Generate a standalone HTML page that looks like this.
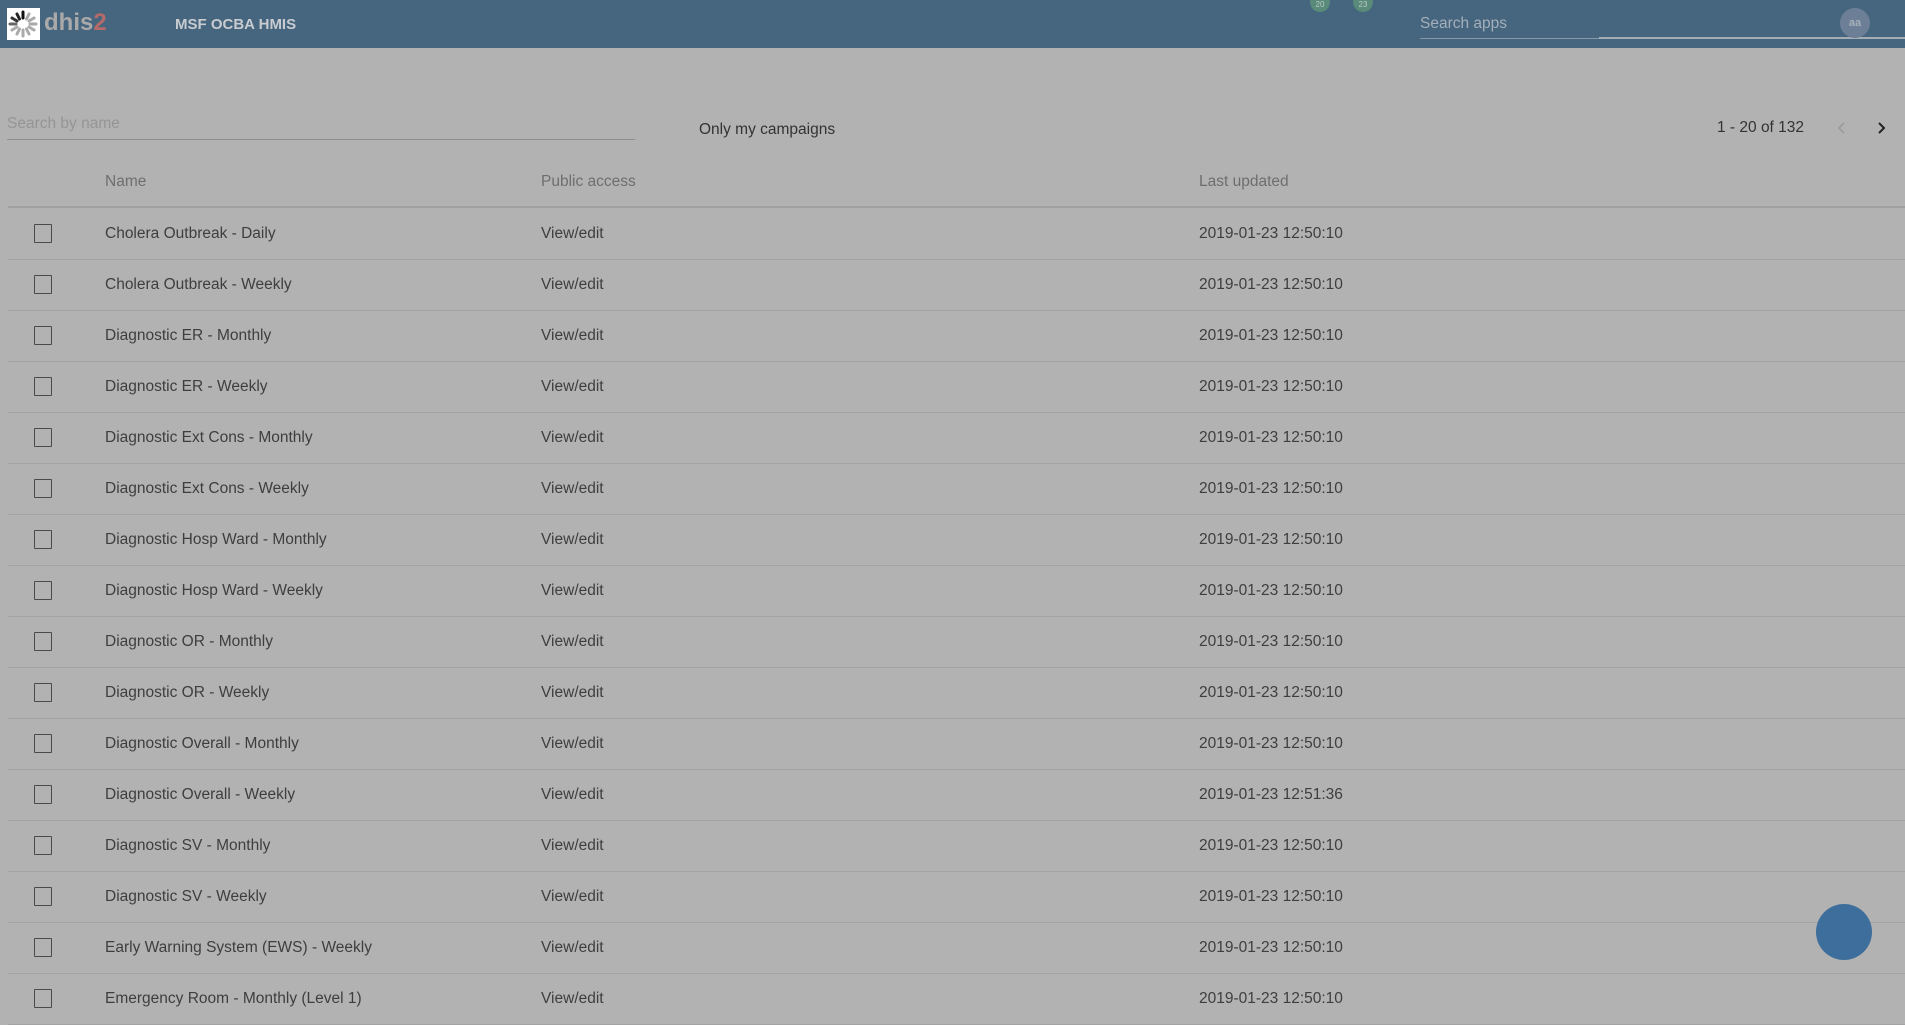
<!DOCTYPE html>
<html><head><meta charset="utf-8"><style>
body{margin:0;width:1905px;height:1008px;overflow:hidden;background:#b2b2b2;font-family:"Liberation Sans",sans-serif;position:relative}
.a{position:absolute;white-space:nowrap}
.hdr{position:absolute;left:0;top:0;width:1905px;height:48px;background:#46657e}
.row{position:absolute;left:8px;width:1897px;height:51px;border-bottom:1px solid #a3a3a3}
.cb{position:absolute;left:26px;top:16px;width:16px;height:17px;border:1.5px solid #4a4a4a;border-radius:1px}
.t{position:absolute;top:17px;font-size:15.5px;color:#3e3e3e}
</style></head><body>
<div class="hdr"></div>
<div class="a" style="left:7px;top:8px;width:33px;height:32px;background:#fff"></div>
<svg class="a" style="left:7px;top:8px" width="33" height="32" viewBox="0 0 33 32">
<g stroke-width="3" stroke-linecap="round">
<line x1="16" y1="4" x2="16" y2="10" stroke="#111"/>
<line x1="10" y1="6" x2="12.5" y2="11" stroke="#222"/>
<line x1="5" y1="10" x2="10" y2="13" stroke="#333"/>
<line x1="3" y1="16" x2="9" y2="16" stroke="#666"/>
<line x1="5" y1="22" x2="10" y2="19" stroke="#aaa"/>
<line x1="10" y1="26" x2="12.5" y2="21" stroke="#aaa"/>
<line x1="16" y1="28" x2="16" y2="22" stroke="#aaa"/>
<line x1="22" y1="26" x2="19.5" y2="21" stroke="#aaa"/>
<line x1="27" y1="22" x2="22" y2="19" stroke="#aaa"/>
<line x1="29" y1="16" x2="23" y2="16" stroke="#aaa"/>
<line x1="27" y1="10" x2="22" y2="13" stroke="#aaa"/>
<line x1="22" y1="6" x2="19.5" y2="11" stroke="#aaa"/>
</g></svg>
<div class="a" style="left:44px;top:9px;font-size:24px;font-weight:bold;color:#a9a9a9">dhis<span style="color:#b56a6a">2</span></div>
<div class="a" style="left:175px;top:16px;font-size:15px;font-weight:bold;color:#c8ccd0">MSF OCBA HMIS</div>
<div class="a" style="left:1310px;top:-8px;width:20px;height:20px;border-radius:50%;background:#5a8a79;color:#b8ccc4;font-size:8px;text-align:center;line-height:26px">20</div>
<div class="a" style="left:1353px;top:-8px;width:20px;height:20px;border-radius:50%;background:#5a8a79;color:#b8ccc4;font-size:8px;text-align:center;line-height:26px">23</div>
<div class="a" style="left:1420px;top:15px;font-size:15.5px;color:#a3afba">Search apps</div>
<div class="a" style="left:1420px;top:38px;width:180px;height:1px;background:#8799a8"></div>
<div class="a" style="left:1599px;top:37px;width:306px;height:2px;background:#a6aeb5"></div>
<div class="a" style="left:1840px;top:8px;width:30px;height:30px;border-radius:50%;background:#6c7f96;color:#a7b1bc;font-size:11px;font-weight:bold;text-align:center;line-height:30px">aa</div>

<div class="a" style="left:7px;top:115px;font-size:15.5px;color:#959595">Search by name</div>
<div class="a" style="left:7px;top:139px;width:628px;height:1px;background:#8f8f8f"></div>
<div class="a" style="left:699px;top:121px;font-size:15.5px;color:#333">Only my campaigns</div>
<div class="a" style="left:1717px;top:119px;font-size:15.5px;color:#333">1 - 20 of 132</div>
<svg class="a" style="left:1836px;top:121px" width="12" height="14"><path d="M8 2L3 7L8 12" fill="none" stroke="#999" stroke-width="1.5"/></svg>
<svg class="a" style="left:1875px;top:121px" width="12" height="14"><path d="M4 2L9 7L4 12" fill="none" stroke="#222" stroke-width="2"/></svg>

<div class="a" style="left:105px;top:173px;font-size:15.5px;color:#6e6e6e">Name</div>
<div class="a" style="left:541px;top:173px;font-size:15.5px;color:#6e6e6e">Public access</div>
<div class="a" style="left:1199px;top:173px;font-size:15.5px;color:#6e6e6e">Last updated</div>
<div class="a" style="left:8px;top:206px;width:1897px;height:2px;background:#a0a0a0"></div>

<div class="row" style="top:208px"><div class="cb"></div><div class="t" style="left:97px">Cholera Outbreak - Daily</div><div class="t" style="left:533px">View/edit</div><div class="t" style="left:1191px">2019-01-23 12:50:10</div></div>
<div class="row" style="top:259px"><div class="cb"></div><div class="t" style="left:97px">Cholera Outbreak - Weekly</div><div class="t" style="left:533px">View/edit</div><div class="t" style="left:1191px">2019-01-23 12:50:10</div></div>
<div class="row" style="top:310px"><div class="cb"></div><div class="t" style="left:97px">Diagnostic ER - Monthly</div><div class="t" style="left:533px">View/edit</div><div class="t" style="left:1191px">2019-01-23 12:50:10</div></div>
<div class="row" style="top:361px"><div class="cb"></div><div class="t" style="left:97px">Diagnostic ER - Weekly</div><div class="t" style="left:533px">View/edit</div><div class="t" style="left:1191px">2019-01-23 12:50:10</div></div>
<div class="row" style="top:412px"><div class="cb"></div><div class="t" style="left:97px">Diagnostic Ext Cons - Monthly</div><div class="t" style="left:533px">View/edit</div><div class="t" style="left:1191px">2019-01-23 12:50:10</div></div>
<div class="row" style="top:463px"><div class="cb"></div><div class="t" style="left:97px">Diagnostic Ext Cons - Weekly</div><div class="t" style="left:533px">View/edit</div><div class="t" style="left:1191px">2019-01-23 12:50:10</div></div>
<div class="row" style="top:514px"><div class="cb"></div><div class="t" style="left:97px">Diagnostic Hosp Ward - Monthly</div><div class="t" style="left:533px">View/edit</div><div class="t" style="left:1191px">2019-01-23 12:50:10</div></div>
<div class="row" style="top:565px"><div class="cb"></div><div class="t" style="left:97px">Diagnostic Hosp Ward - Weekly</div><div class="t" style="left:533px">View/edit</div><div class="t" style="left:1191px">2019-01-23 12:50:10</div></div>
<div class="row" style="top:616px"><div class="cb"></div><div class="t" style="left:97px">Diagnostic OR - Monthly</div><div class="t" style="left:533px">View/edit</div><div class="t" style="left:1191px">2019-01-23 12:50:10</div></div>
<div class="row" style="top:667px"><div class="cb"></div><div class="t" style="left:97px">Diagnostic OR - Weekly</div><div class="t" style="left:533px">View/edit</div><div class="t" style="left:1191px">2019-01-23 12:50:10</div></div>
<div class="row" style="top:718px"><div class="cb"></div><div class="t" style="left:97px">Diagnostic Overall - Monthly</div><div class="t" style="left:533px">View/edit</div><div class="t" style="left:1191px">2019-01-23 12:50:10</div></div>
<div class="row" style="top:769px"><div class="cb"></div><div class="t" style="left:97px">Diagnostic Overall - Weekly</div><div class="t" style="left:533px">View/edit</div><div class="t" style="left:1191px">2019-01-23 12:51:36</div></div>
<div class="row" style="top:820px"><div class="cb"></div><div class="t" style="left:97px">Diagnostic SV - Monthly</div><div class="t" style="left:533px">View/edit</div><div class="t" style="left:1191px">2019-01-23 12:50:10</div></div>
<div class="row" style="top:871px"><div class="cb"></div><div class="t" style="left:97px">Diagnostic SV - Weekly</div><div class="t" style="left:533px">View/edit</div><div class="t" style="left:1191px">2019-01-23 12:50:10</div></div>
<div class="row" style="top:922px"><div class="cb"></div><div class="t" style="left:97px">Early Warning System (EWS) - Weekly</div><div class="t" style="left:533px">View/edit</div><div class="t" style="left:1191px">2019-01-23 12:50:10</div></div>
<div class="row" style="top:973px"><div class="cb"></div><div class="t" style="left:97px">Emergency Room - Monthly (Level 1)</div><div class="t" style="left:533px">View/edit</div><div class="t" style="left:1191px">2019-01-23 12:50:10</div></div>

<div class="a" style="left:1816px;top:904px;width:56px;height:56px;border-radius:50%;background:#3e6e9b"></div>
</body></html>
